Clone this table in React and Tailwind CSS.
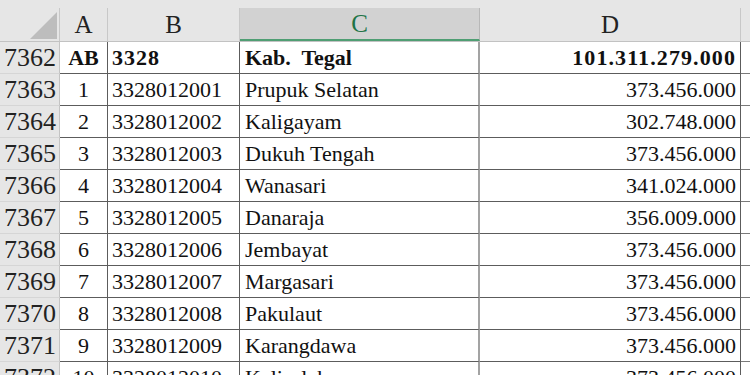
const rows = [
  ['1', '3328012001', 'Prupuk Selatan', '373.456.000'],
  ['2', '3328012002', 'Kaligayam', '302.748.000'],
  ['3', '3328012003', 'Dukuh Tengah', '373.456.000'],
  ['4', '3328012004', 'Wanasari', '341.024.000'],
  ['5', '3328012005', 'Danaraja', '356.009.000'],
  ['6', '3328012006', 'Jembayat', '373.456.000'],
  ['7', '3328012007', 'Margasari', '373.456.000'],
  ['8', '3328012008', 'Pakulaut', '373.456.000'],
  ['9', '3328012009', 'Karangdawa', '373.456.000'],
  ['10', '3328012010', 'Kalisalak', '373.456.000'],
];

const cols = 'grid grid-cols-[60px_48px_132px_240px_261px_9px]';
const cell = 'h-[32px] flex items-center border-b border-r border-[#5c5c5c] overflow-hidden whitespace-nowrap';

function Row({ num, a, b, c, d, bold }) {
  const w = bold ? 'font-bold' : '';
  return (
    <div className={cols}>
      <div className="h-[32px] flex items-center justify-end pr-[3px] bg-[#e6e6e6] border-b border-r border-b-[#d6d6d6] border-r-[#c4c4c4] text-[26px] text-[#222]">
        {num}
      </div>
      <div className={`${cell} justify-center ${w}`}>{a}</div>
      <div className={`${cell} pl-[4px] ${w} ${bold ? 'tracking-[1px]' : ''}`}>{b}</div>
      <div className={`${cell} pl-[5px] border-r-2 border-r-[#a3a3a3] whitespace-pre ${w}`}>{c}</div>
      <div className={`${cell} justify-end pr-[4px] ${w} ${bold ? 'tracking-[1.1px]' : ''}`}>{d}</div>
      <div className="h-[32px] border-b border-[#7a7a7a]" />
    </div>
  );
}

export default function App() {
  return (
    <div className="w-[750px] h-[375px] overflow-hidden bg-white text-[#111] text-[22px] leading-none font-['Liberation_Serif','DejaVu_Serif',serif]">
      {/* column headers */}
      <div className={`${cols} bg-[#e6e6e6] pt-[8px] border-b border-[#c2c2c2]`}>
        <div className="relative h-[33px] border-r border-[#c8c8c8]">
          <svg className="absolute left-[30px] top-[4px]" width="27" height="27" viewBox="0 0 27 27">
            <polygon points="27,0 27,27 0,27" fill="#bdbdbd" />
          </svg>
        </div>
        <div className="h-[33px] flex items-center justify-center border-r border-[#c8c8c8] text-[25px] text-[#222]">A</div>
        <div className="h-[33px] flex items-center justify-center border-r border-[#c8c8c8] text-[25px] text-[#222]">B</div>
        <div className="h-[33px] flex items-center justify-center bg-[#d2d2d2] border-r border-b-2 border-r-[#b8b8b8] border-b-[#4f9e73] text-[25px] text-[#217346]">C</div>
        <div className="h-[33px] flex items-center justify-center border-r border-[#c8c8c8] text-[25px] text-[#222]">D</div>
        <div className="h-[33px]" />
      </div>

      <Row num="7362" a="AB" b="3328" c="Kab.  Tegal" d="101.311.279.000" bold />
      {rows.map((r, i) => (
        <Row key={r[1]} num={7363 + i} a={r[0]} b={r[1]} c={r[2]} d={r[3]} />
      ))}
    </div>
  );
}
